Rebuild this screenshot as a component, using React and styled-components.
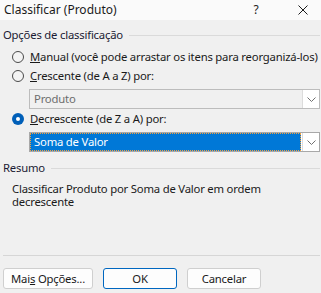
import React from 'react';
import styled, { createGlobalStyle } from 'styled-components';

const GlobalStyle = createGlobalStyle`
    html, body {
        margin: 0;
        padding: 0;
        background: #f0f0f0;
    }
    * {
        box-sizing: border-box;
    }
`;

const Dialog = styled.div`
    width: 321px;
    height: 293px;
    background: #f0f0f0;
    font-family: 'Noto Sans', 'Open Sans', sans-serif;
    font-size: 11.3px;
    line-height: 14px;
    letter-spacing: -0.2px;
    color: #1a1a1a;
    display: flex;
    flex-direction: column;
    overflow: hidden;
`;

const TitleBar = styled.div`
    height: 20px;
    background: #fafafa;
    display: flex;
    align-items: center;
    padding: 0 0 0 4px;
`;

const Title = styled.div`
    flex: 1;
    font-size: 12px;
    letter-spacing: 0;
    color: #1a1a1a;
`;

const TitleButton = styled.div`
    width: ${p => p.$w}px;
    margin-right: ${p => p.$mr || 0}px;
    display: flex;
    justify-content: center;
    align-items: center;
    font-size: 12px;
`;

const Content = styled.div`
    flex: 1;
    display: flex;
    flex-direction: column;
    padding: 8px 1px 0 3px;
`;

const GroupHeader = styled.div`
    display: flex;
    align-items: center;
    gap: 6px;
    height: 14px;
    margin-top: ${p => p.$mt || 0}px;
    color: #1b1b33;
    & > span {
        white-space: nowrap;
    }
    &::after {
        content: '';
        flex: 1;
        height: 1px;
        background: #dadada;
    }
`;

const RadioRow = styled.label`
    display: flex;
    align-items: center;
    gap: 6px;
    height: 14px;
    white-space: nowrap;
    margin: ${p => p.$mt}px 0 0 9px;
`;

const Radio = styled.span`
    width: 12px;
    height: 12px;
    border-radius: 50%;
    flex: none;
    display: flex;
    align-items: center;
    justify-content: center;
    border: ${p => (p.$checked ? 'none' : '1px solid #4a4a4a')};
    background: ${p => (p.$checked ? '#005fb8' : '#f3f3f3')};
    &::after {
        content: '';
        width: 4px;
        height: 4px;
        border-radius: 50%;
        background: #fff;
        display: ${p => (p.$checked ? 'block' : 'none')};
    }
`;

const Key = styled.span`
    text-decoration: underline;
    text-underline-offset: 1px;
`;

const Combo = styled.div`
    margin: ${p => p.$mt}px 0 0 26px;
    height: 20px;
    display: flex;
    border: 1px solid ${p => (p.$disabled ? '#bcbcbc' : '#a8a8a8')};
    background: ${p => (p.$disabled ? '#f0f0f0' : '#fff')};
`;

const ComboValue = styled.div`
    flex: 1;
    display: flex;
    align-items: center;
    padding-left: 4px;
    margin: ${p => (p.$selected ? '0 1px 0 0' : '0')};
    color: ${p => (p.$selected ? '#fff' : '#6d6d6d')};
    background: ${p => (p.$selected ? '#0078d7' : 'transparent')};
    outline: ${p => (p.$selected ? '1px dotted #f7a13b' : 'none')};
    outline-offset: -1px;
`;

const ComboArrow = styled.div`
    width: 17px;
    background: #fff;
    border-left: 1px solid #dcdcdc;
    display: flex;
    align-items: center;
    justify-content: center;
`;

const Summary = styled.div`
    margin: 8px 0 0 9px;
    width: 262px;
    line-height: 12.5px;
`;

const Spacer = styled.div`
    flex: 1;
`;

const Separator = styled.div`
    height: 1px;
    background: #d6d6d6;
    margin: 0 0 12px 0;
`;

const ButtonRow = styled.div`
    display: flex;
    gap: 10px;
    margin-bottom: 4px;
`;

const Button = styled.button`
    width: ${p => p.$w}px;
    height: 21px;
    padding: 0;
    font: inherit;
    letter-spacing: inherit;
    color: #1a1a1a;
    background: #fdfdfd;
    border: 1px solid ${p => (p.$primary ? '#0067c0' : '#cfcfcf')};
    border-radius: 3px;
`;

const Chevron = () => (
    <svg width="9" height="5" viewBox="0 0 9 5">
        <path d="M0.5 0.5 L4.5 4.5 L8.5 0.5" fill="none" stroke="#707070" strokeWidth="1" />
    </svg>
);

const CloseIcon = () => (
    <svg width="10" height="10" viewBox="0 0 10 10">
        <path d="M0.5 0.5 L9.5 9.5 M9.5 0.5 L0.5 9.5" fill="none" stroke="#1a1a1a" strokeWidth="1" />
    </svg>
);

export default function App() {
    return (
        <>
            <GlobalStyle />
            <Dialog>
                <TitleBar>
                    <Title>Classificar (Produto)</Title>
                    <TitleButton $w={14} $mr={22}>?</TitleButton>
                    <TitleButton $w={36}><CloseIcon /></TitleButton>
                </TitleBar>
                <Content>
                    <GroupHeader><span>Opções de classificação</span></GroupHeader>
                    <RadioRow $mt={8}>
                        <Radio />
                        <span><Key>M</Key>anual (você pode arrastar os itens para reorganizá-los)</span>
                    </RadioRow>
                    <RadioRow $mt={5}>
                        <Radio />
                        <span><Key>C</Key>rescente (de A a Z) por:</span>
                    </RadioRow>
                    <Combo $disabled $mt={6}>
                        <ComboValue>Produto</ComboValue>
                        <ComboArrow><Chevron /></ComboArrow>
                    </Combo>
                    <RadioRow $mt={3}>
                        <Radio $checked />
                        <span><Key>D</Key>ecrescente (de Z a A) por:</span>
                    </RadioRow>
                    <Combo $mt={6}>
                        <ComboValue $selected>Soma de Valor</ComboValue>
                        <ComboArrow><Chevron /></ComboArrow>
                    </Combo>
                    <GroupHeader $mt={9}><span>Resumo</span></GroupHeader>
                    <Summary>Classificar Produto por Soma de Valor em ordem decrescente</Summary>
                    <Spacer />
                    <Separator />
                    <ButtonRow>
                        <Button $w={90}>Mai<Key>s</Key> Opções...</Button>
                        <Button $w={74} $primary>OK</Button>
                        <Button $w={74}>Cancelar</Button>
                    </ButtonRow>
                </Content>
            </Dialog>
        </>
    );
}
